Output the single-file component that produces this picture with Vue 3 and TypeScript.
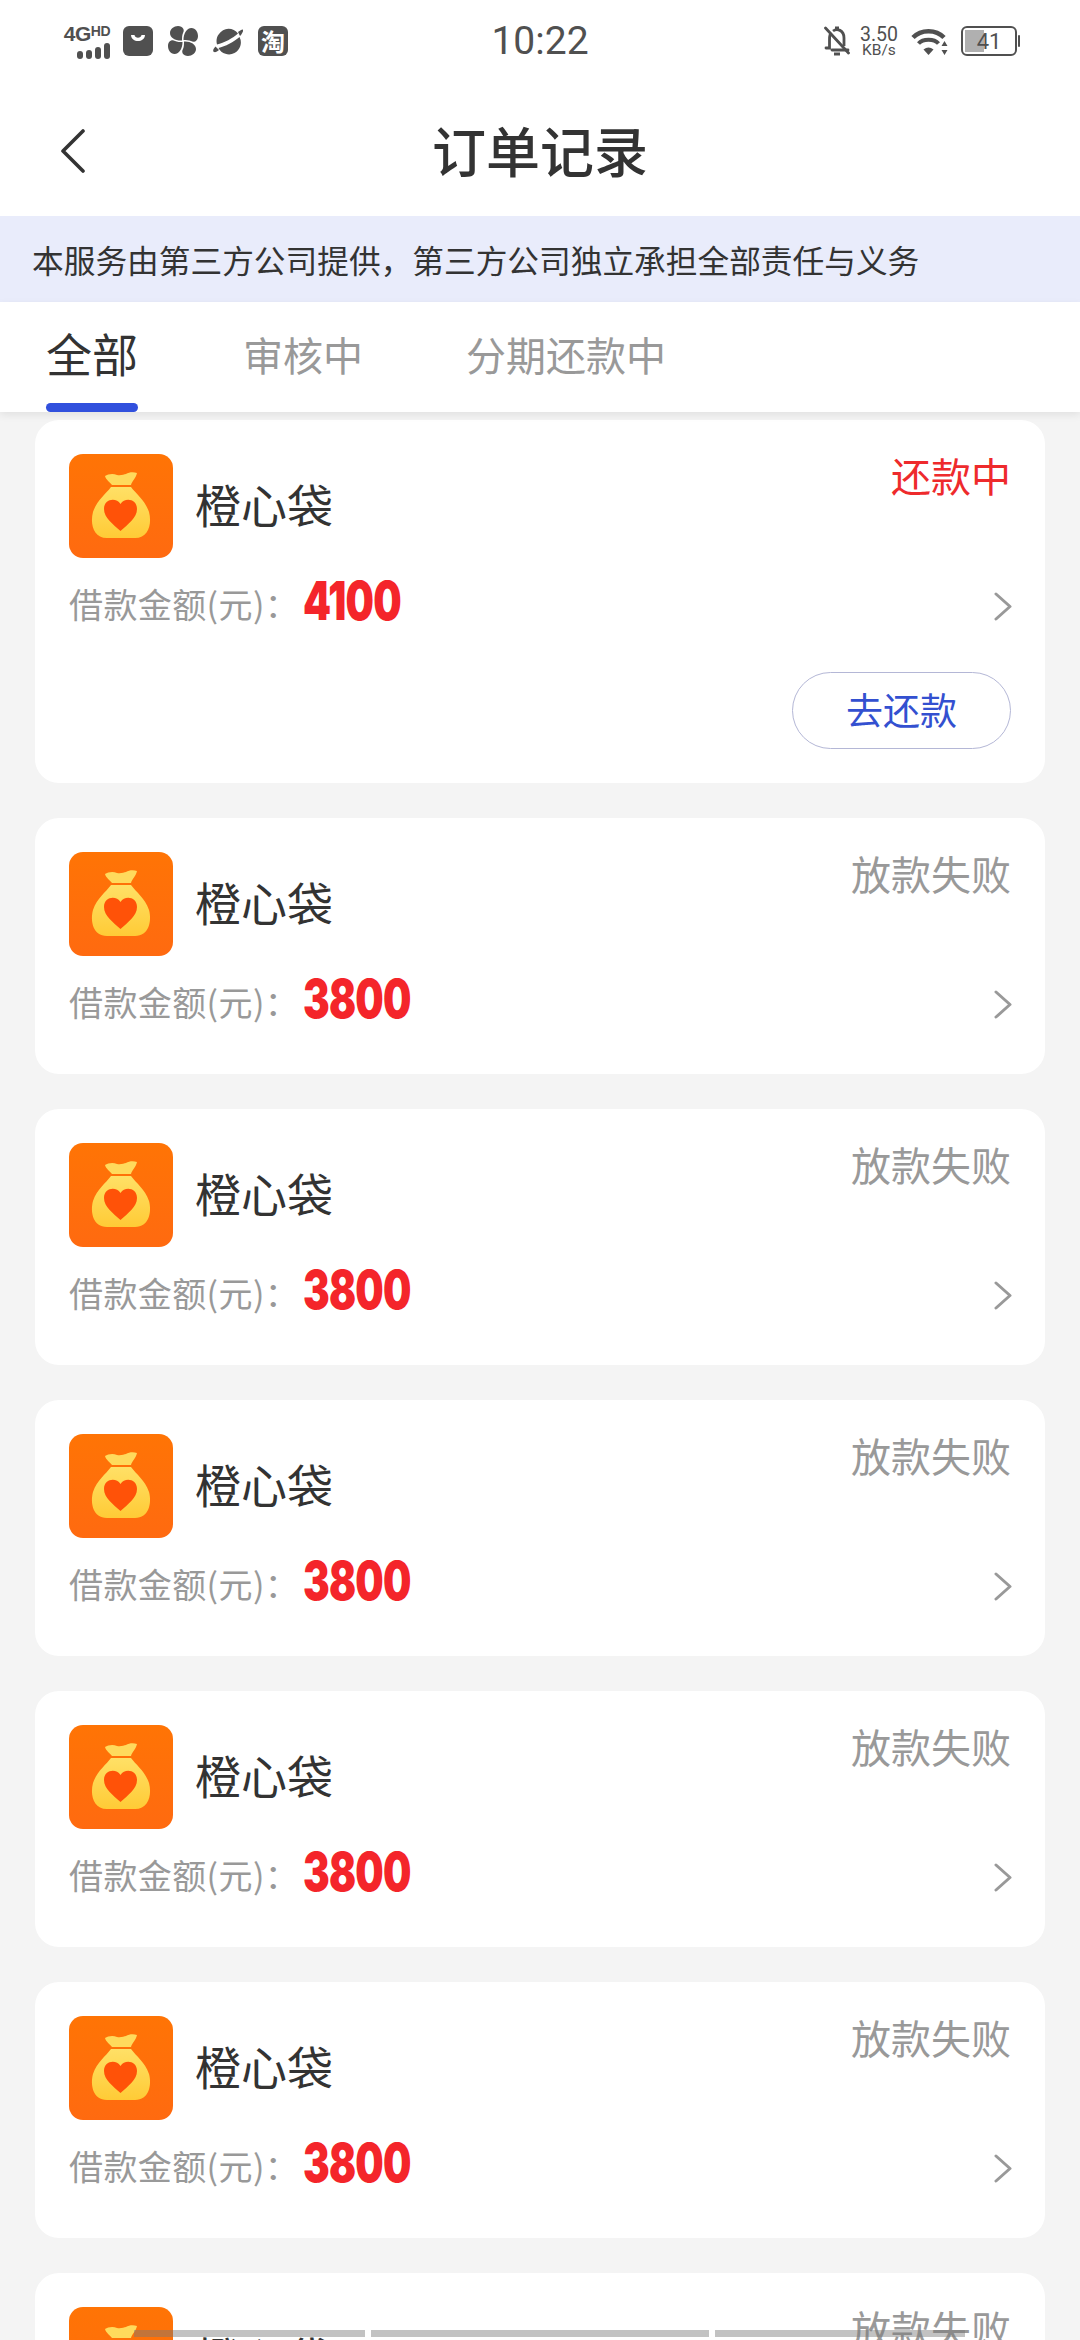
<template>
  <div class="page">
    <div class="status-bar">
      <div class="status-left">
        <div class="signal">
          <span class="net">4G<small>HD</small></span>
          <span class="bars"><i></i><i></i><i></i><i></i></span>
        </div>
        <svg class="app-icon" viewBox="0 0 30 30">
          <rect width="30" height="30" rx="6" fill="#505050" />
          <path d="M8 9h3.500c.5 3.500 6.500 3.500 7 0H22c-.5 8-13.500 8-14 0z" fill="#fff" />
        </svg>
        <svg class="app-icon gap-wide" viewBox="0 0 30 30" fill="#505050">
          <path d="M14 14.500C8 15 2 12 2 7c0-4 4-7 8-7 5 0 7 4 5 7-1 2-1 5-1 7.500z" />
          <path d="M15.500 14c0-6 3-12 8-12 4 0 6.500 4 6.500 8 0 5-4 7-7 5-2-1-5-1-7.500-1z" />
          <path d="M16 15.500c6-.5 12 2.500 12 7.500 0 4-4 7-8 7-5 0-7-4-5-7 1-2 1-5 1-7.500z" />
          <path d="M14.500 16c0 6-3 12-8 12-4 0-6.500-4-6.500-8 0-5 4-7 7-5 2 1 5 1 7.500 1z" />
        </svg>
        <svg class="app-icon gap-wide" viewBox="0 0 30 30" fill="#505050">
          <path d="M25 7.500A11.500 11.500 0 0 0 6 8C3.500 11 3 15 4 18.500 11 17 20 12 25 7.500z" />
          <path d="M26.500 11C21 16 12 20.500 5.500 22A11.500 11.500 0 0 0 26.500 11z" />
          <path d="M2.500 20.500C0 23 -.5 25.500 1 26c1.500.5 3.500-.5 5-2l-3.500-3.500zM25 6c3-2 4.500-3 5-2 .5 1-1 4-3 6l-2-4z" />
        </svg>
        <div class="taobao">淘</div>
      </div>
      <div class="clock">10:22</div>
      <div class="status-right">
        <svg class="bell" viewBox="0 0 26 30" fill="none" stroke="#505050" stroke-width="2.800">
          <path d="M1.500 2l23 25" stroke-linecap="round" />
          <path d="M6 9c-.5 1.500-.5 3-.5 5v8H2M8 24h16" stroke-linecap="round" />
          <path d="M9 5c4-3 11-1 11 7v8" />
          <path d="M10 28h6" stroke-width="3" />
          <path d="M11 2h4" stroke-width="3" />
        </svg>
        <div class="speed"><span>3.50</span><span class="unit">KB/s</span></div>
        <svg class="wifi" viewBox="0 0 37 27" fill="#505050">
          <path d="M2 9.500C10 1 25 1 33 9.500" fill="none" stroke="#505050" stroke-width="4.500" />
          <path d="M7.500 15.500C12 10.500 23 10.500 27.500 15.500" fill="none" stroke="#505050" stroke-width="4" />
          <path d="M12.500 21.500Q17.500 17.500 22.500 21.500L17.500 27z" />
          <path d="M33.500 13l3 5h-6zM33.500 27l-3-5h6z" />
        </svg>
        <div class="battery">
          <div class="battery-fill"></div>
          <span>41</span>
        </div>
        <div class="battery-cap"></div>
      </div>
    </div>

    <div class="nav-bar">
      <svg class="back" viewBox="0 0 26 44" fill="none" stroke="#333" stroke-width="3.600" stroke-linecap="round" stroke-linejoin="round">
        <path d="M23 2L3 22l20 20" />
      </svg>
      <div class="nav-title">订单记录</div>
    </div>

    <div class="notice">本服务由第三方公司提供，第三方公司独立承担全部责任与义务</div>

    <div class="tabs">
      <div
        v-for="(tab, index) in tabs"
        :key="tab"
        class="tab"
        :class="{ active: index === 0 }"
      >{{ tab }}</div>
    </div>

    <div class="list">
      <div v-for="(order, index) in orders" :key="index" class="card">
        <div class="card-head">
          <svg class="logo" viewBox="0 0 104 104">
            <defs>
              <linearGradient :id="`bag${index}`" x1="0" y1="0" x2="0" y2="1">
                <stop offset="0" stop-color="#ffe066" />
                <stop offset="1" stop-color="#ffcb36" />
              </linearGradient>
              <linearGradient :id="`bg${index}`" x1="0" y1="0" x2="0" y2="1">
                <stop offset="0" stop-color="#ff7405" />
                <stop offset="1" stop-color="#ff6a10" />
              </linearGradient>
            </defs>
            <rect width="104" height="104" rx="14" :fill="`url(#bg${index})`" />
            <path d="M36 22c3-2 8-3 12-1 4 1 7-1 9-1 3-2 8-2 11-1-1 5-5 8-6 12H43c-2-3-6-5-7-9z" fill="#ffda5c" />
            <path d="M42 33h20c5 7 14 13 18 25 3 11 0 26-14 26H38C24 84 21 69 24 58c4-12 13-18 18-25z" :fill="`url(#bag${index})`" />
            <path d="M51.500 77C44 70 35 64 35 55c0-10 12-12 16.500-5 4.500-7 16.500-5 16.500 5 0 9-9 15-16.500 22z" fill="#ff5208" />
          </svg>
          <div class="name">{{ order.name }}</div>
          <div class="status" :class="{ repaying: order.canRepay }">{{ order.status }}</div>
        </div>
        <div class="amount-row">
          <span class="label">借款金额(元)：</span>
          <span class="amount">{{ order.amount }}</span>
          <svg class="chevron" viewBox="0 0 18 29" fill="none" stroke="#999" stroke-width="3" stroke-linecap="round" stroke-linejoin="round">
            <path d="M2 2l14 12.500L2 27" />
          </svg>
        </div>
        <div v-if="order.canRepay" class="card-foot">
          <div class="repay-btn">去还款</div>
        </div>
      </div>
    </div>

    <div class="overlay-bars"><i></i><i></i><i></i></div>
  </div>
</template>

<script setup lang="ts">
interface Order {
  name: string
  status: string
  amount: number
  canRepay: boolean
}

const tabs: string[] = ['全部', '审核中', '分期还款中']

const failed: Order = { name: '橙心袋', status: '放款失败', amount: 3800, canRepay: false }

const orders: Order[] = [
  { name: '橙心袋', status: '还款中', amount: 4100, canRepay: true },
  failed,
  failed,
  failed,
  failed,
  failed,
  failed
]
</script>

<style>
html,
body {
  margin: 0;
  background: #f4f4f4;
}
</style>

<style scoped>
.page {
  position: relative;
  width: 1080px;
  height: 2340px;
  overflow: hidden;
  background: #f4f4f4;
  font-family: "Noto Sans CJK SC", "Liberation Sans", sans-serif;
}

.status-bar {
  display: flex;
  align-items: center;
  height: 82px;
  padding: 0 60px;
  box-sizing: border-box;
  background: #fff;
}

.status-left,
.status-right {
  display: flex;
  flex: 1;
  align-items: center;
}

.status-right {
  justify-content: flex-end;
}

.signal {
  display: flex;
  flex-direction: column;
  align-items: flex-end;
  width: 48px;
  margin: 0 13px 0 2px;
}

.net {
  font-family: "Liberation Sans", sans-serif;
  font-weight: 700;
  font-size: 21px;
  line-height: 16px;
  letter-spacing: -0.5px;
  white-space: nowrap;
  color: #505050;
}

.net small {
  font-size: 14px;
  vertical-align: 5px;
}

.bars {
  display: flex;
  align-items: flex-end;
  gap: 3px;
  margin-top: 1px;
}

.bars i {
  width: 6px;
  border-radius: 3px;
  background: #505050;
}

.bars i:nth-child(1) { height: 8px; }
.bars i:nth-child(2) { height: 9px; }
.bars i:nth-child(3) { height: 12px; }
.bars i:nth-child(4) { height: 16px; }

.app-icon {
  width: 30px;
  height: 30px;
}

.gap-wide {
  margin-left: 15px;
}

.taobao {
  width: 30px;
  height: 30px;
  margin-left: 15px;
  border-radius: 6px;
  background: #505050;
  color: #fff;
  font-size: 24px;
  line-height: 29px;
  text-align: center;
  font-weight: 700;
}

.clock {
  font-family: "Roboto", sans-serif;
  font-size: 39px;
  color: #505050;
}

.bell {
  width: 26px;
  height: 30px;
  margin-right: 10px;
}

.speed {
  display: flex;
  flex-direction: column;
  align-items: center;
  font-family: "Roboto", sans-serif;
  font-size: 19.500px;
  line-height: 17px;
  color: #505050;
  margin-right: 13px;
}

.speed .unit {
  font-size: 15.500px;
  line-height: 14px;
}

.wifi {
  width: 37px;
  height: 27px;
  margin-right: 13px;
}

.battery {
  position: relative;
  width: 56px;
  height: 30px;
  box-sizing: border-box;
  border: 2.500px solid #505050;
  border-radius: 6px;
  display: flex;
  align-items: center;
  justify-content: center;
  font-family: "Roboto", sans-serif;
  font-size: 22px;
  color: #505050;
}

.battery span {
  position: relative;
}

.battery-fill {
  position: absolute;
  left: 2px;
  top: 2px;
  bottom: 2px;
  width: 19px;
  background: #b0b0b0;
}

.battery-cap {
  width: 2px;
  height: 12px;
  margin-left: 1px;
  border-radius: 1px;
  background: #505050;
}

.nav-bar {
  position: relative;
  display: flex;
  align-items: center;
  justify-content: center;
  height: 134px;
  background: #fff;
}

.back {
  position: absolute;
  left: 60px;
  top: 47px;
  width: 26px;
  height: 44px;
}

.nav-title {
  font-size: 54px;
  font-weight: 500;
  color: #333;
  line-height: 1;
  margin-top: 2px;
}

.notice {
  height: 86px;
  padding-left: 32px;
  background: #e9ecfb;
  color: #333;
  font-size: 31.700px;
  line-height: 86px;
}

.tabs {
  position: relative;
  display: flex;
  align-items: flex-start;
  height: 110px;
  padding-left: 46px;
  gap: 103px;
  background: #fff;
  box-shadow: 0 3px 8px rgba(0, 0, 0, 0.08);
  z-index: 1;
}

.tab {
  position: relative;
  height: 110px;
  padding-top: 24px;
  box-sizing: border-box;
  color: #999;
  font-size: 40px;
  line-height: 56px;
}

.tab.active {
  margin-right: 2px;
  color: #333;
  font-size: 46px;
  line-height: 52px;
}

.tab.active::after {
  content: "";
  position: absolute;
  left: 0;
  right: 0;
  bottom: 0;
  height: 9px;
  border-radius: 5px;
  background: #3150dd;
}

.list {
  display: flex;
  flex-direction: column;
  gap: 35px;
  padding: 8px 35px 0;
}

.card {
  padding: 34px 34px 34px 34px;
  background: #fff;
  border-radius: 24px;
}

.card-head {
  display: flex;
  align-items: center;
}

.logo {
  width: 104px;
  height: 104px;
  flex: none;
}

.name {
  margin-left: 22px;
  margin-top: -6px;
  font-size: 46px;
  color: #333;
}

.status {
  align-self: flex-start;
  margin-top: -3px;
  margin-left: auto;
  font-size: 40px;
  line-height: 48px;
  color: #999;
}

.status.repaying {
  color: #ee2a2c;
}

.amount-row {
  display: flex;
  align-items: center;
  height: 62px;
  margin: 14px 0 8px;
}

.label {
  flex: none;
  width: 234px;
  font-size: 34px;
  letter-spacing: 0.4px;
  color: #999;
}

.amount {
  display: inline-block;
  margin-top: -6px;
  font-family: "Inter", sans-serif;
  font-weight: 900;
  font-size: 54px;
  letter-spacing: -1px;
  color: #f4252a;
  transform: scaleX(0.74);
  transform-origin: left center;
}

.chevron {
  width: 18px;
  height: 29px;
  margin: 6px -1px 0 auto;
}

.card-foot {
  display: flex;
  justify-content: flex-end;
  margin-top: 38px;
}

.repay-btn {
  width: 219px;
  height: 77px;
  box-sizing: border-box;
  border: 1px solid #b4b7d6;
  border-radius: 39px;
  color: #3350d0;
  font-size: 37px;
  line-height: 73px;
  text-align: center;
}

.overlay-bars {
  position: absolute;
  left: 134px;
  top: 2330px;
  display: flex;
  gap: 6px;
  z-index: 2;
}

.overlay-bars i {
  width: 338px;
  height: 7px;
  background: rgba(120, 120, 120, 0.45);
}

.overlay-bars i:first-child {
  width: 231px;
}

.overlay-bars i:last-child {
  width: 250px;
}
</style>
